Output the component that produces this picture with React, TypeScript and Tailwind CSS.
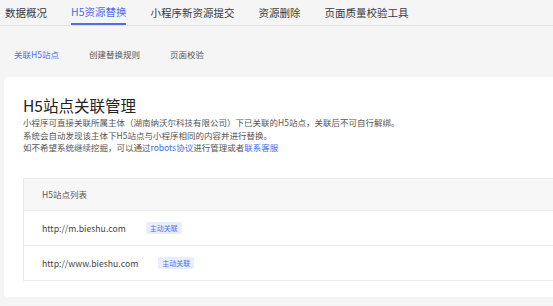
import React from "react";

const tabs = ["数据概况", "H5资源替换", "小程序新资源提交", "资源删除", "页面质量校验工具"];
const subTabs = ["关联H5站点", "创建替换规则", "页面校验"];
const sites = [
	{ url: "http://m.bieshu.com", tag: "主动关联" },
	{ url: "http://www.bieshu.com", tag: "主动关联" },
];

export default function App() {
	return (
		<div
			className="w-[553px] h-[306px] overflow-hidden bg-[#f5f5f6] text-[#333]"
			style={{ fontFamily: '"Noto Sans CJK SC", "Noto Sans", sans-serif' }}
		>
			{/* top tabs */}
			<div className="h-[26px] flex gap-[24px] pl-[5px] border-b border-[#e4e4e6]">
				{tabs.map((t, i) => (
					<div
						key={t}
						className={
							i === 1
								? "h-full flex items-center text-[10.5px] text-[#4d6cf0] border-b-2 border-[#4d6cf0] -mb-px pt-px"
								: "h-full flex items-center text-[10.5px] text-[#3a3a3a]"
						}
					>
						{t}
					</div>
				))}
			</div>

			{/* sub tabs */}
			<div className="h-[51px] flex items-center gap-[30px] pl-[14px] pt-[5px]">
				{subTabs.map((t, i) => (
					<span key={t} className={i === 0 ? "text-[8.5px] text-[#4d6cf0]" : "text-[8.5px] text-[#555]"}>
						{t}
					</span>
				))}
			</div>

			{/* card */}
			<div className="ml-[4px] w-[600px] bg-white rounded-[4px] pt-[18px] pb-[16px] pl-[19px]">
				<h2 className="text-[15.5px] leading-[20px] text-[#222]">H5站点关联管理</h2>
				<div className="mt-[1px] text-[8.5px] leading-[12.7px] text-[#555]">
					<p>小程序可直接关联所属主体（湖南纳沃尔科技有限公司）下已关联的H5站点，关联后不可自行解绑。</p>
					<p>系统会自动发现该主体下H5站点与小程序相同的内容并进行替换。</p>
					<p>
						如不希望系统继续挖掘，可以通过<span className="text-[#3c6cf0]">robots协议</span>进行管理或者
						<span className="text-[#3c6cf0]">联系客服</span>
					</p>
				</div>

				{/* table */}
				<div className="mt-[24px] border border-[#ebebed]">
					<div className="h-[32px] flex items-center pl-[18px] bg-[#f7f7f8] border-b border-[#ebebed] text-[8.5px] text-[#555]">
						H5站点列表
					</div>
					{sites.map((s, i) => (
						<div
							key={s.url}
							className={
								i === 0
									? "h-[35px] flex items-center pl-[18px] gap-[20px] border-b border-[#ebebed]"
									: "h-[34px] flex items-center pl-[18px] gap-[20px]"
							}
						>
							<span className="text-[8.7px] text-[#444]">{s.url}</span>
							<span className="h-[12px] px-[4px] flex items-center rounded-[2px] bg-[#e9eefd] text-[7px] text-[#4d6cf0]">
								{s.tag}
							</span>
						</div>
					))}
				</div>
			</div>
		</div>
	);
}
